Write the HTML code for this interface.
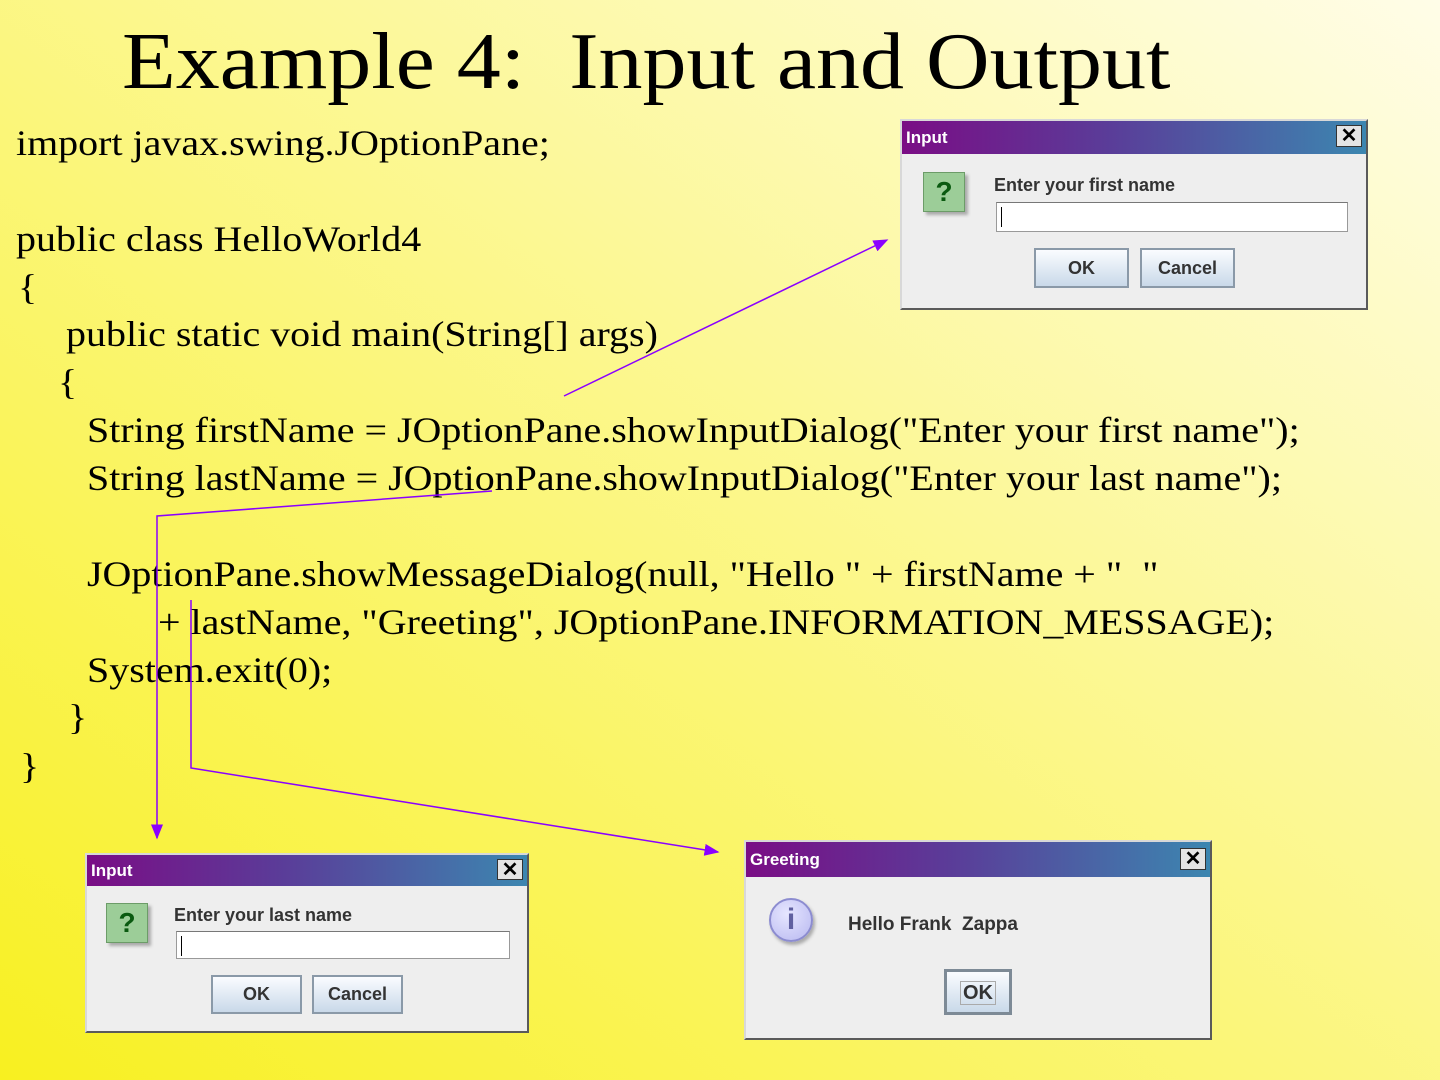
<!DOCTYPE html>
<html><head><meta charset="utf-8"><style>
*{margin:0;padding:0;box-sizing:border-box}
body{width:1440px;height:1080px;overflow:hidden;position:relative;
background:linear-gradient(to top right,#f8f020 0%,#fbf67a 45%,#fffde8 100%);
font-family:"Liberation Serif",serif;color:#000}
.t{position:absolute;white-space:pre;font-size:36px;line-height:40px;transform:scaleX(1.11);transform-origin:0 0}
.title{position:absolute;left:122px;top:14px;font-size:80px;line-height:96px;white-space:pre;transform:scaleX(1.1);transform-origin:0 0}
.dlg{position:absolute;background:#eeeeee;border:2px solid #5a5a5a;border-top-color:#d8d8d8;border-left-color:#d8d8d8;font-family:"Liberation Sans",sans-serif}
.tb{position:absolute;left:0;right:0;top:0;background:linear-gradient(to right,#7a0d85,#5a3d99 45%,#3c86b0);color:#fff;font-weight:bold;font-size:17px;padding-left:4px}
.x{position:absolute;right:4px;top:4px;width:26px;height:22px;background:#e4e4e4;border:1px solid #333;color:#000;font-size:20px;line-height:20px;text-align:center;font-weight:bold}
.q{position:absolute;width:42px;height:40px;background:#9ccd98;border:1px solid #6c9c68;box-shadow:3px 3px 3px #aaa;color:#0a5a10;font-weight:bold;font-size:28px;text-align:center;line-height:38px}
.lbl{position:absolute;font-size:18px;font-weight:bold;color:#333;white-space:pre}
.fld{position:absolute;background:#fff;border:1px solid #999;border-top-color:#777}
.fld:after{content:"";position:absolute;left:4px;top:4px;width:1px;height:20px;background:#000}
.btn{position:absolute;background:linear-gradient(#fafcff,#c9d9e9);border:2px solid #8a99a8;font-size:18px;font-weight:bold;color:#333;text-align:center}
</style></head><body>
<div class="title">Example 4:  Input and Output</div>
<div class="t" style="left:16px;top:123px">import javax.swing.JOptionPane;</div>
<div class="t" style="left:16px;top:219px">public class HelloWorld4</div>
<div class="t" style="left:18px;top:267px">{</div>
<div class="t" style="left:66px;top:314px">public static void main(String[] args)</div>
<div class="t" style="left:58px;top:362px">{</div>
<div class="t" style="left:87px;top:410px">String firstName = JOptionPane.showInputDialog("Enter your first name");</div>
<div class="t" style="left:87px;top:458px">String lastName = JOptionPane.showInputDialog("Enter your last name");</div>
<div class="t" style="left:87px;top:554px">JOptionPane.showMessageDialog(null, "Hello " + firstName + "  "</div>
<div class="t" style="left:158px;top:602px">+ lastName, "Greeting", JOptionPane.INFORMATION_MESSAGE);</div>
<div class="t" style="left:87px;top:650px">System.exit(0);</div>
<div class="t" style="left:68px;top:697px">}</div>
<div class="t" style="left:20px;top:746px">}</div>

<svg width="1440" height="1080" style="position:absolute;left:0;top:0">
<defs><marker id="a" markerWidth="10" markerHeight="8" refX="9" refY="4" orient="auto"><path d="M0,0 L10,4 L0,8z" fill="#8a00ff"/></marker></defs>
<g stroke="#8a00ff" stroke-width="1.5" fill="none">
<path d="M564,396 L887,240" marker-end="url(#a)"/>
<path d="M492,491 L157,516 L157,838" marker-end="url(#a)"/>
<path d="M191,600 L191,768 L718,852" marker-end="url(#a)"/>
</g></svg>

<div class="dlg" style="left:900px;top:119px;width:468px;height:191px">
 <div class="tb" style="height:33px;line-height:33px">Input<div class="x">✕</div></div>
 <div class="q" style="left:21px;top:51px">?</div>
 <div class="lbl" style="left:92px;top:54px">Enter your first name</div>
 <div class="fld" style="left:94px;top:81px;width:352px;height:30px"></div>
 <div class="btn" style="left:132px;top:127px;width:95px;height:40px;line-height:36px">OK</div>
 <div class="btn" style="left:238px;top:127px;width:95px;height:40px;line-height:36px">Cancel</div>
</div>

<div class="dlg" style="left:85px;top:853px;width:444px;height:180px">
 <div class="tb" style="height:31px;line-height:31px">Input<div class="x" style="top:4px;height:21px">✕</div></div>
 <div class="q" style="left:19px;top:48px">?</div>
 <div class="lbl" style="left:87px;top:50px">Enter your last name</div>
 <div class="fld" style="left:89px;top:76px;width:334px;height:28px"></div>
 <div class="btn" style="left:124px;top:120px;width:91px;height:39px;line-height:35px">OK</div>
 <div class="btn" style="left:225px;top:120px;width:91px;height:39px;line-height:35px">Cancel</div>
</div>

<div class="dlg" style="left:744px;top:840px;width:468px;height:200px">
 <div class="tb" style="height:35px;line-height:35px">Greeting<div class="x" style="top:6px">✕</div></div>
 <div style="position:absolute;left:23px;top:56px;width:44px;height:44px;border-radius:50%;background:radial-gradient(circle at 40% 35%,#e6e6ff,#b8b8f0);border:2px solid #8c8cd0;box-shadow:2px 3px 3px #aaa;color:#6060a0;font-weight:bold;font-size:30px;text-align:center;line-height:40px;font-family:'Liberation Sans',sans-serif">i</div>
 <div class="lbl" style="left:102px;top:72px;font-size:19px">Hello Frank  Zappa</div>
 <div class="btn" style="left:198px;top:127px;width:68px;height:46px;line-height:42px;border:3px solid #7d8a96;font-size:20px"><span style="border:1px solid #aaa;padding:0 2px">OK</span></div>
</div>
</body></html>
